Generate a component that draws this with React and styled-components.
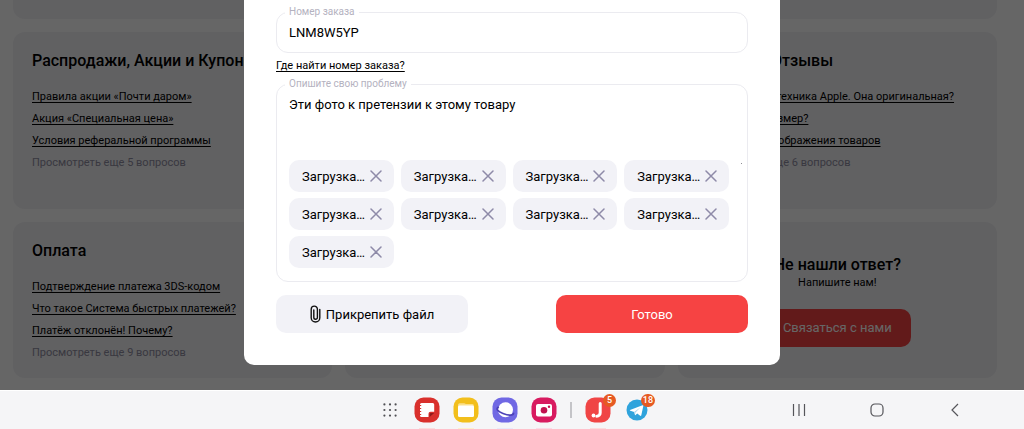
import React from "react"
import styled, { createGlobalStyle } from "styled-components"

const FILES = Array.from({ length: 9 }, (_, i) => i)

const Cross = () => (
  <svg width="12" height="12" viewBox="0 0 12 12" fill="none" stroke="#8e8aa8" strokeWidth="1.5" strokeLinecap="round">
    <path d="M1 1 11 11M11 1 1 11" />
  </svg>
)

const Clip = () => (
  <svg width="11" height="18" viewBox="0 0 11 18" fill="none" stroke="#111" strokeWidth="1.4" strokeLinecap="round">
    <path d="M9.8 4.5v8.2a4.3 4.3 0 0 1-8.6 0V4.2a3.1 3.1 0 0 1 6.2 0v8.2a1.8 1.8 0 0 1-3.6 0V5" />
  </svg>
)

const Topic = ({ title, links, more }) => (
  <Card>
    <CardTitle>{title}</CardTitle>
    <LinkList>
      {links.map(text => (
        <li key={text}>
          <TopicLink href="#">{text}</TopicLink>
        </li>
      ))}
      <li>
        <MoreLink href="#">{more}</MoreLink>
      </li>
    </LinkList>
  </Card>
)

const Help = () => (
  <CardGrid>
    <CutCard />
    <CutCard />
    <CutCard />
    <Topic
      title="Распродажи, Акции и Купоны"
      links={["Правила акции «Почти даром»", "Акция «Специальная цена»", "Условия реферальной программы"]}
      more="Просмотреть еще 5 вопросов"
    />
    <Card $tall />
    <Topic
      title="Товары и Отзывы"
      links={["На сайтах есть техника Apple. Она оригинальная?", "Как выбрать размер?", "Особенность отображения товаров"]}
      more="Просмотреть еще 6 вопросов"
    />
    <Topic
      title="Оплата"
      links={["Подтверждение платежа 3DS-кодом", "Что такое Система быстрых платежей?", "Платёж отклонён! Почему?"]}
      more="Просмотреть еще 9 вопросов"
    />
    <Card />
    <ContactCard>
      <CardTitle>Не нашли ответ?</CardTitle>
      <ContactText>Напишите нам!</ContactText>
      <ContactButton type="button">Связаться с нами</ContactButton>
    </ContactCard>
  </CardGrid>
)

const RequestForm = () => (
  <Modal role="dialog" onSubmit={e => e.preventDefault()}>
    <Field>
      <Legend>
        <label htmlFor="order">Номер заказа</label>
      </Legend>
      <Input id="order" defaultValue="LNM8W5YP" />
    </Field>
    <HintLink href="#">Где найти номер заказа?</HintLink>
    <Field>
      <Legend>
        <label htmlFor="problem">Опишите свою проблему</label>
      </Legend>
      <TextArea id="problem" defaultValue="Эти фото к претензии к этому товару" />
      <Grip />
      <Files>
        {FILES.map(id => (
          <File key={id}>
            Загрузка…
            <RemoveButton type="button" aria-label="Удалить">
              <Cross />
            </RemoveButton>
          </File>
        ))}
      </Files>
    </Field>
    <Actions>
      <Button type="button">
        <Clip />
        Прикрепить файл
      </Button>
      <Button type="submit" $primary>
        Готово
      </Button>
    </Actions>
  </Modal>
)

const TaskBar = () => (
  <Bar>
    <Apps>
      <AppButton aria-label="Приложения" $width="22px">
        <svg width="14" height="14" viewBox="0 0 14 14" fill="#505055">
          {[1.4, 7, 12.6].map(y => [1.4, 7, 12.6].map(x => <circle key={`${x}-${y}`} cx={x} cy={y} r="1.1" />))}
        </svg>
      </AppButton>
      <AppButton aria-label="Заметки" $glow="#fbdcdc">
        <svg width="26" height="26" viewBox="0 0 26 26">
          <rect x=".5" y=".5" width="25" height="25" rx="9" fill="#d9302c" />
          <path d="M7.5 6h11.200a1.500 1.500 0 0 1 1.500 1.500v7.300h-3.700a2 2 0 0 0-2 2V20h-7a1.500 1.500 0 0 1-1.500-1.500v-11A1.500 1.500 0 0 1 7.500 6Z" fill="#fff" />
          <path d="M15.600 20v-2.600a1.400 1.400 0 0 1 1.400-1.400h3.200Z" fill="#8f1b1b" />
          <path d="M5.200 8.500h2M5.200 11.500h2M5.200 14.500h2M5.200 17.500h2" stroke="#d9302c" strokeWidth="1.2" />
        </svg>
      </AppButton>
      <AppButton aria-label="Мои файлы" $glow="#fdf0cc">
        <svg width="26" height="26" viewBox="0 0 26 26">
          <rect x=".5" y=".5" width="25" height="25" rx="9" fill="#f2bf1c" />
          <path d="M5 8a1.800 1.800 0 0 1 1.800-1.800h4.400L13 7h6.200A1.800 1.800 0 0 1 21 8.800V12H5Z" fill="#fbe08a" />
          <rect x="5" y="8.500" width="16" height="11.500" rx="1.500" fill="#fff" />
        </svg>
      </AppButton>
      <AppButton aria-label="Интернет" $glow="#e9e8fb">
        <svg width="26" height="26" viewBox="0 0 26 26">
          <rect x=".5" y=".5" width="25" height="25" rx="9" fill="#7068e4" />
          <circle cx="13.500" cy="12.800" r="7.500" fill="#fff" />
          <path d="M6.200 10.300C3.800 12 5.600 14.400 11 16.500s10.500 2.300 10.500-.2" fill="none" stroke="#4d42b8" strokeWidth="1.8" strokeLinecap="round" />
        </svg>
      </AppButton>
      <AppButton aria-label="Камера" $glow="#fbd9e8">
        <svg width="26" height="26" viewBox="0 0 26 26">
          <rect x=".5" y=".5" width="25" height="25" rx="9" fill="#d81b60" />
          <rect x="5" y="7" width="16" height="12.500" rx="2" fill="#fff" />
          <circle cx="13" cy="13.200" r="3.300" fill="#c2124f" />
          <circle cx="18" cy="9.800" r="1.200" fill="#c2124f" />
        </svg>
      </AppButton>
      <Divider />
      <AppButton aria-label="Joom" $glow="#fbdcdc">
        <svg width="26" height="26" viewBox="0 0 26 26">
          <rect x=".5" y=".5" width="25" height="25" rx="9" fill="#f04545" />
          <path d="M15.200 6.500v9.300a3.400 3.400 0 0 1-3.400 3.400" fill="none" stroke="#fff" strokeWidth="3" strokeLinecap="round" />
          <circle cx="8.500" cy="18.500" r="1.900" fill="#fff" />
        </svg>
        <Badge>5</Badge>
      </AppButton>
      <AppButton aria-label="Telegram">
        <svg width="22" height="22" viewBox="0 0 22 22">
          <circle cx="11" cy="11" r="10.500" fill="#2fa3dc" />
          <path d="M4 11.100 16.500 6.200c.6-.2 1 .2.800.9l-2 9.200c-.1.700-.6.800-1.100.5l-3-2.200-1.600 1.500c-.4.300-.6.200-.7-.3l-.7-2.900-3.900-1.200c-.6-.2-.6-.4-.3-.6Z" fill="#fff" />
          <path d="m8.300 12.800 6-4.200-4.800 4.900-.4 2Z" fill="#a9d4ee" />
        </svg>
        <Badge>18</Badge>
      </AppButton>
    </Apps>
    <Nav>
      <NavButton aria-label="Недавние">
        <svg width="14" height="14" viewBox="0 0 14 14" stroke="#55555a" strokeWidth="1.2">
          <path d="M1.500 1v12M7 1v12M12.500 1v12" />
        </svg>
      </NavButton>
      <NavButton aria-label="Домой">
        <svg width="14" height="14" viewBox="0 0 14 14" fill="none" stroke="#55555a" strokeWidth="1.2">
          <rect x="1" y="1" width="12" height="12" rx="4" />
        </svg>
      </NavButton>
      <NavButton aria-label="Назад">
        <svg width="14" height="14" viewBox="0 0 14 14" fill="none" stroke="#55555a" strokeWidth="1.2">
          <path d="M10 1 4 7l6 6" />
        </svg>
      </NavButton>
    </Nav>
  </Bar>
)

const App = () => (
  <Screen>
    <GlobalStyle />
    <Page>
      <Help />
      <Overlay>
        <RequestForm />
      </Overlay>
    </Page>
    <TaskBar />
  </Screen>
)

export default App

const GlobalStyle = createGlobalStyle`
  * {
    box-sizing: border-box;
  }
  body {
    margin: 0;
    color: #000;
    background: #fff;
    font-family: Roboto, "Liberation Sans", sans-serif;
    font-size: 13px;
  }
  button, input, textarea {
    font: inherit;
    color: inherit;
  }
  svg {
    display: block;
    flex: none;
  }
`

const Screen = styled.div`
  display: flex;
  flex-direction: column;
  height: 100vh;
`

const Page = styled.main`
  position: relative;
  flex: 1;
  min-height: 0;
  overflow: hidden;
`

const CardGrid = styled.div`
  display: grid;
  grid-template-columns: repeat(3, minmax(0, 1fr));
  gap: 13px;
  padding: 0 27px 13px 13px;
`

const Card = styled.section`
  min-height: ${props => (props.$tall ? "177px" : "0")};
  padding: 19px 19px 14px;
  border-radius: 12px;
  background: #f2f2f6;
  white-space: nowrap;
`

const CutCard = styled.section`
  height: 19px;
  border-radius: 0 0 12px 12px;
  background: #f2f2f6;
`

const CardTitle = styled.h2`
  margin: 0;
  font-size: 16px;
  font-weight: 500;
  line-height: 20px;
`

const LinkList = styled.ul`
  margin: 15px 0 0;
  padding: 0;
  list-style: none;
  font-size: 11px;
  line-height: 22px;
`

const TopicLink = styled.a`
  color: #000;
  text-underline-offset: 2px;
`

const MoreLink = styled.a`
  color: #8f8da0;
  text-decoration: none;
`

const ContactCard = styled(Card)`
  display: flex;
  flex-direction: column;
  align-items: center;
  justify-content: center;
  padding-bottom: 18px;
`

const ContactText = styled.p`
  margin: 0 0 18px;
  font-size: 11px;
  line-height: 16px;
`

const ContactButton = styled.button`
  height: 38px;
  padding: 0 19px;
  border: 0;
  border-radius: 10px;
  background: #f64343;
  color: #fff;
`

const Overlay = styled.div`
  position: absolute;
  inset: 0;
  display: flex;
  align-items: flex-start;
  justify-content: center;
  background: rgba(0, 0, 0, 0.6);
`

const Modal = styled.form`
  width: 100%;
  max-width: 536px;
  padding: 6px 32px 32px;
  border-radius: 0 0 10px 10px;
  background: #fff;
`

const Field = styled.fieldset`
  position: relative;
  min-width: 0;
  margin: 0;
  padding: 0 12px;
  border: 1px solid #ebebf0;
  border-radius: 12px;
`

const Legend = styled.legend`
  margin-left: -4px;
  padding: 0 4px;
  color: #b4b2c0;
  font-size: 10px;
  line-height: 12px;
`

const Input = styled.input`
  display: block;
  width: 100%;
  height: 28px;
  margin-bottom: 6px;
  padding: 0;
  border: 0;
  outline: 0;
  background: none;
`

const TextArea = styled.textarea`
  display: block;
  width: 100%;
  height: 70px;
  padding: 6px 0 4px;
  border: 0;
  outline: 0;
  background: none;
  line-height: 18px;
  resize: none;
`

const Grip = styled.span`
  position: absolute;
  top: 73px;
  right: 5px;
  width: 1px;
  height: 1px;
  background: #8e8e94;
`

const HintLink = styled.a`
  display: block;
  width: fit-content;
  margin: 6px 0 5px;
  color: #000;
  font-size: 11px;
  line-height: 14px;
  text-underline-offset: 2px;
`

const Files = styled.ul`
  display: grid;
  grid-template-columns: repeat(4, 1fr);
  gap: 6px 7px;
  margin: 0 6px 13px 0;
  padding: 0;
  list-style: none;
`

const File = styled.li`
  display: flex;
  align-items: center;
  justify-content: space-between;
  height: 32px;
  padding: 0 12px 0 13px;
  border-radius: 10px;
  background: #f2f2f7;
  white-space: nowrap;
`

const RemoveButton = styled.button`
  padding: 0;
  border: 0;
  background: none;
`

const Actions = styled.div`
  display: flex;
  justify-content: space-between;
  margin-top: 13px;
`

const Button = styled.button`
  display: flex;
  align-items: center;
  justify-content: center;
  gap: 5px;
  width: 192px;
  height: 38px;
  border: 0;
  border-radius: 10px;
  background: ${props => (props.$primary ? "#f64343" : "#f2f2f7")};
  color: ${props => (props.$primary ? "#fff" : "#000")};
`

const Bar = styled.footer`
  display: grid;
  grid-template-columns: 1fr auto 1fr;
  height: 39px;
  padding: 0 30px 0 35px;
  border-top: 1px solid #fff;
  background: #f5f5f7;
`

const Apps = styled.div`
  grid-column: 2;
  display: flex;
  align-items: center;
  gap: 13px;
`

const AppButton = styled.button`
  position: relative;
  display: flex;
  align-items: center;
  justify-content: center;
  width: ${props => props.$width || "26px"};
  height: 38px;
  padding: 0;
  border: 0;
  background: none;

  &::after {
    content: "";
    position: absolute;
    bottom: 0;
    left: 5px;
    right: 5px;
    height: 1px;
    background: ${props => props.$glow || "transparent"};
  }
`

const Badge = styled.span`
  position: absolute;
  top: 3px;
  right: -5px;
  min-width: 13px;
  height: 13px;
  padding: 0 2px;
  border-radius: 7px;
  background: #e65a22;
  color: #fff;
  font-size: 9px;
  font-weight: 500;
  line-height: 13px;
  text-align: center;
`

const Divider = styled.span`
  width: 2px;
  height: 16px;
  background: #c4c4c8;
`

const Nav = styled.nav`
  display: flex;
  align-items: center;
  justify-content: flex-end;
`

const NavButton = styled.button`
  display: flex;
  justify-content: center;
  width: 78px;
  padding: 0;
  border: 0;
  background: none;
`
